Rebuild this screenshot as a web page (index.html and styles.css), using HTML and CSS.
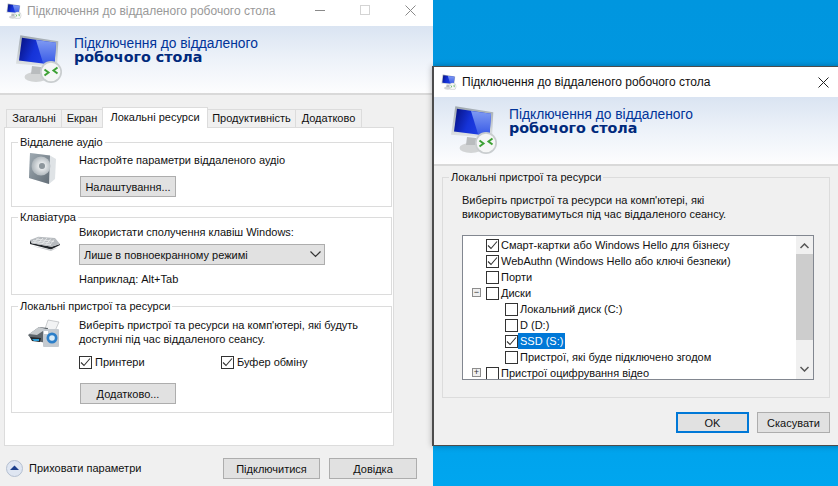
FILE: index.html
```html
<!DOCTYPE html>
<html lang="uk">
<head>
    <meta charset="UTF-8">
    <title>Підключення до віддаленого робочого стола</title>
    <link rel="stylesheet" href="styles.css">
</head>
<body>
    <svg class="defs" width="0" height="0">
        <defs>
            <linearGradient id="screenBlue" x1="0" y1="0" x2="1" y2="0.3">
                <stop offset="0" stop-color="#060f7c"/>
                <stop offset="0.5" stop-color="#1533d8"/>
                <stop offset="1" stop-color="#2444e6"/>
            </linearGradient>
            <linearGradient id="screenShine" x1="0" y1="0" x2="0" y2="1">
                <stop offset="0" stop-color="#7f9af2"/>
                <stop offset="1" stop-color="#3557e6"/>
            </linearGradient>
            <linearGradient id="frameGrey" x1="0" y1="0" x2="0" y2="1">
                <stop offset="0" stop-color="#9fa8af"/>
                <stop offset="1" stop-color="#e3e6e8"/>
            </linearGradient>
            <linearGradient id="speakerGrey" x1="0" y1="0" x2="1" y2="1">
                <stop offset="0" stop-color="#a0abb3"/>
                <stop offset="1" stop-color="#626d76"/>
            </linearGradient>
            <radialGradient id="cone" cx="0.55" cy="0.5" r="0.6">
                <stop offset="0" stop-color="#8d969c"/>
                <stop offset="0.3" stop-color="#e4e7e9"/>
                <stop offset="1" stop-color="#a3acb2"/>
            </radialGradient>
            <symbol id="rdpIcon" viewBox="0 0 49 49">
                <ellipse cx="21" cy="43" rx="11.5" ry="5" fill="#d2d4d5"/>
                <polygon points="17,32 26,33 27,40 16,40" fill="#b9bcbe"/>
                <polygon points="5.3,1.3 43.3,7.3 42,33 1,29.7" fill="url(#frameGrey)"/>
                <polygon points="7,3.800 41,8.800 39.500,31 4,26.500" fill="url(#screenBlue)"/>
                <polygon points="21,6 41,8.800 39.500,31 28,29" fill="url(#screenShine)"/>
                <circle cx="36" cy="38" r="11" fill="#c9cdcf"/>
                <circle cx="36" cy="38" r="9.300" fill="#f5f6f6"/>
                <path d="M29.500 35.500l4 3-4 3M42.500 33.500l-4 3 4 3" fill="none" stroke="#3ea135" stroke-width="2"/>
            </symbol>
            <symbol id="speakerIcon" viewBox="0 0 28 33">
                <polygon points="1,1 21,3.500 27,7 26,27 20,32 0,26" fill="#dfe3e6"/>
                <polygon points="1,1 21,3.500 20,32 0,26" fill="url(#speakerGrey)"/>
                <circle cx="12" cy="14" r="9.500" fill="url(#cone)"/>
                <circle cx="13" cy="14" r="3" fill="#8d969c"/>
            </symbol>
            <symbol id="keyboardIcon" viewBox="0 0 32 16">
                <polygon points="1,8 22,13.500 31,9 31,8 22.700,10.700 2.700,7.300 1,4" fill="#23272b"/>
                <polygon points="1,4 9.300,0.700 26,2 31,8 22.700,10.700 2.700,7.300" fill="#b7bbbf"/>
                <path d="M4 4.500l17 2.500M7 3l18 2.500M3 6l19 3M10 1.500l-5 5M14 2l-5 5.500M18 2l-5 6M22 2.500l-5 6M25 3.500l-4 5.500" stroke="#f2f3f4" stroke-width="0.700" fill="none"/>
                <polygon points="3,10 22,15 29,11.500 22,13.500" fill="#c5c8cb"/>
            </symbol>
            <symbol id="deviceIcon" viewBox="0 0 32 29">
                <polygon points="20,1 31,3 27,12 17,10" fill="#f2f3f4" stroke="#a9adb0" stroke-width="0.600"/>
                <polygon points="0,16 11,8 20,9 18,24 4,21" fill="#5f666c"/>
                <polygon points="1,15 11,8 18,10 9,16" fill="#c7cbce"/>
                <polygon points="2,18 13,19 12,23 4,22" fill="#23282c"/>
                <polygon points="4,20 11,20 11,22 6,22" fill="#2f9ed8"/>
                <rect x="15" y="10" width="16" height="18" rx="1" fill="#c4cad0"/>
                <circle cx="24" cy="19" r="5.500" fill="#2c7fc9"/>
                <circle cx="24" cy="19" r="2.800" fill="#d9ecf8"/>
                <rect x="16" y="12" width="4" height="3" fill="#fff"/>
            </symbol>
            <symbol id="tick" viewBox="0 0 13 13">
                <path d="M2 6.500l3 3 6-7" fill="none" stroke="#333" stroke-width="1.100"/>
            </symbol>
        </defs>
    </svg>

    <div class="window window-main">
        <div class="titlebar titlebar-inactive">
            <svg class="title-icon"><use href="#rdpIcon"/></svg>
            <span class="title-text">Підключення до віддаленого робочого стола</span>
            <span class="win-btn win-min"></span>
            <span class="win-btn win-max"></span>
            <svg class="win-close" viewBox="0 0 11 11"><path d="M0.500 0.500l10 10M10.500 0.500l-10 10" stroke="#8a8a8a" fill="none"/></svg>
        </div>
        <div class="banner">
            <svg class="banner-icon"><use href="#rdpIcon"/></svg>
            <div class="banner-text">
                <div class="banner-line">Підключення до віддаленого</div>
                <div class="banner-bold">робочого стола</div>
            </div>
        </div>
        <div class="tabs">
            <div class="tab tab-general">Загальні</div>
            <div class="tab tab-screen">Екран</div>
            <div class="tab tab-active">Локальні ресурси</div>
            <div class="tab tab-perf">Продуктивність</div>
            <div class="tab tab-extra">Додатково</div>
        </div>
        <div class="panel">
            <fieldset class="group group-audio">
                <legend>Віддалене аудіо</legend>
                <div class="group-row">
                    <svg class="icon-speaker"><use href="#speakerIcon"/></svg>
                    <div class="group-body">
                        <div class="line">Настройте параметри віддаленого аудіо</div>
                        <button class="btn btn-wide btn-audio">Налаштування...</button>
                    </div>
                </div>
            </fieldset>
            <fieldset class="group group-keys">
                <legend>Клавіатура</legend>
                <div class="group-row">
                    <svg class="icon-keyboard"><use href="#keyboardIcon"/></svg>
                    <div class="group-body">
                        <div class="line">Використати сполучення клавіш Windows:</div>
                        <div class="select">
                            <span>Лише в повноекранному режимі</span>
                            <svg class="select-arrow" viewBox="0 0 11 7"><path d="M0.500 0.500l5 5 5-5" fill="none" stroke="#333" stroke-width="1.200"/></svg>
                        </div>
                        <div class="line line-example">Наприклад: Alt+Tab</div>
                    </div>
                </div>
            </fieldset>
            <fieldset class="group group-devices">
                <legend>Локальні пристрої та ресурси</legend>
                <div class="group-row">
                    <svg class="icon-device"><use href="#deviceIcon"/></svg>
                    <div class="group-body">
                        <div class="line">Виберіть пристрої та ресурси на комп'ютері, які будуть</div>
                        <div class="line line-tight">доступні під час віддаленого сеансу.</div>
                        <div class="check-row">
                            <label class="check-item check-item-first"><span class="cb"><svg><use href="#tick"/></svg></span>Принтери</label>
                            <label class="check-item"><span class="cb"><svg><use href="#tick"/></svg></span>Буфер обміну</label>
                        </div>
                        <button class="btn btn-wide btn-more">Додатково...</button>
                    </div>
                </div>
            </fieldset>
        </div>
        <div class="footer">
            <span class="collapse">
                <svg viewBox="0 0 17 17"><circle cx="8.500" cy="8.500" r="8" fill="#dfe6f2" stroke="#b4bfd0"/><polygon points="8.500,5.500 13,10 4,10" fill="#1c3f8c"/></svg>
            </span>
            <span class="collapse-label">Приховати параметри</span>
            <button class="btn btn-connect">Підключитися</button>
            <button class="btn btn-help">Довідка</button>
        </div>
    </div>

    <div class="window window-dialog">
        <div class="titlebar titlebar-dialog">
            <svg class="title-icon"><use href="#rdpIcon"/></svg>
            <span class="title-text">Підключення до віддаленого робочого стола</span>
            <svg class="win-close" viewBox="0 0 11 11"><path d="M0.500 0.500l10 10M10.500 0.500l-10 10" stroke="#222" fill="none"/></svg>
        </div>
        <div class="banner">
            <svg class="banner-icon"><use href="#rdpIcon"/></svg>
            <div class="banner-text">
                <div class="banner-line">Підключення до віддаленого</div>
                <div class="banner-bold">робочого стола</div>
            </div>
        </div>
        <fieldset class="group group-local">
            <legend>Локальні пристрої та ресурси</legend>
            <div class="local-body">
                <div class="line">Виберіть пристрої та ресурси на комп'ютері, які</div>
                <div class="line line-tight">використовуватимуться під час віддаленого сеансу.</div>
                <div class="tree">
                    <ul class="tree-list">
                        <li class="tree-row"><span class="cb"><svg><use href="#tick"/></svg></span>Смарт-картки або Windows Hello для бізнесу</li>
                        <li class="tree-row"><span class="cb"><svg><use href="#tick"/></svg></span>WebAuthn (Windows Hello або ключі безпеки)</li>
                        <li class="tree-row"><span class="cb"></span>Порти</li>
                        <li class="tree-row"><span class="expander">&minus;</span><span class="cb"></span>Диски</li>
                        <li class="tree-row tree-child"><span class="cb"></span>Локальний диск (C:)</li>
                        <li class="tree-row tree-child"><span class="cb"></span>D (D:)</li>
                        <li class="tree-row tree-child"><span class="cb"><svg><use href="#tick"/></svg></span><span class="tree-selected">SSD (S:)</span></li>
                        <li class="tree-row tree-child"><span class="cb"></span>Пристрої, які буде підключено згодом</li>
                        <li class="tree-row"><span class="expander">+</span><span class="cb"></span>Пристрої оцифрування відео</li>
                    </ul>
                    <div class="scrollbar">
                        <svg class="scroll-arrow" viewBox="0 0 9 6"><path d="M0.500 5l4-4 4 4" fill="none" stroke="#555" stroke-width="1.500"/></svg>
                        <div class="scroll-track"><div class="scroll-thumb"></div></div>
                        <svg class="scroll-arrow" viewBox="0 0 9 6"><path d="M0.500 1l4 4 4-4" fill="none" stroke="#555" stroke-width="1.500"/></svg>
                    </div>
                </div>
            </div>
        </fieldset>
        <div class="dialog-actions">
            <button class="btn btn-ok">OK</button>
            <button class="btn btn-cancel">Скасувати</button>
        </div>
    </div>
</body>
</html>
```

FILE: styles.css
```css
:root {
    --face: #f0f0f0;
    --line: #dcdcdc;
    --btn-bg: #e1e1e1;
    --btn-border: #adadad;
    --accent: #0078d7;
}
* {
    box-sizing: border-box;
}
html, body {
    height: 100%;
}
body {
    margin: 0;
    overflow: hidden;
    position: relative;
    font-family: "Liberation Sans", Arial, sans-serif;
    font-size: 11px;
    line-height: 14px;
    color: #111;
    background: linear-gradient(180deg, #0096df 0%, #0099e2 60%, #00a6ef 100%);
}
.defs {
    position: absolute;
}

/* windows */
.window {
    position: absolute;
    background: var(--face);
}
.window-main {
    left: 0;
    top: 0;
    width: 433px;
    height: 486px;
}
.window-dialog {
    left: 432px;
    top: 66px;
    width: 420px;
    height: 380px;
    border: 1px solid #4c4c4c;
    border-width: 1px 1px 1px 2px;
    box-shadow: 0 0 6px rgba(0, 0, 0, 0.3);
}
.titlebar {
    display: flex;
    align-items: center;
    background: #fff;
    position: relative;
    font-size: 12px;
}
.titlebar-inactive {
    height: 26px;
    padding: 0 0 5px 6px;
    color: #999;
}
.titlebar-dialog {
    height: 30px;
    padding: 0 0 0 7px;
    color: #111;
}
.title-icon {
    width: 16px;
    height: 16px;
    margin-right: 5px;
    flex: none;
}
.win-btn {
    position: absolute;
    display: block;
}
.win-min {
    left: 315px;
    top: 10px;
    width: 10px;
    height: 1px;
    background: #8a8a8a;
}
.win-max {
    left: 360px;
    top: 5px;
    width: 10px;
    height: 10px;
    border: 1px solid #d4d4d4;
}
.win-close {
    position: absolute;
    width: 11px;
    height: 11px;
}
.titlebar-inactive .win-close {
    left: 405px;
    top: 5px;
}
.titlebar-dialog .win-close {
    left: 384px;
    top: 10px;
}

/* banner */
.banner {
    height: 69px;
    display: flex;
    padding: 8px 0 0 15px;
    background: linear-gradient(180deg, #dae4f2 0%, #edf2f9 50%, #fdfdfe 100%);
    border-bottom: 2px solid #d9d9d9;
}
.window-dialog .banner {
    padding-left: 16px;
}
.banner-icon {
    width: 49px;
    height: 49px;
    margin-right: 10px;
    flex: none;
}
.banner-text {
    padding-top: 3px;
}
.banner-line {
    font-size: 13.8px;
    line-height: 13px;
    height: 13px;
    color: #003399;
}
.banner-bold {
    font-family: "DejaVu Sans", Verdana, sans-serif;
    font-size: 14.3px;
    font-weight: bold;
    line-height: 14px;
    color: #00297c;
}

/* tabs */
.tabs {
    display: flex;
    align-items: flex-end;
    height: 32px;
    padding-left: 6px;
    position: relative;
    z-index: 1;
}
.tab {
    height: 18px;
    line-height: 17px;
    text-align: center;
    background: #f0f0f0;
    border: 1px solid var(--line);
    border-bottom: none;
    margin-right: -1px;
}
.tab-general { width: 56px; }
.tab-screen { width: 42px; }
.tab-active {
    width: 106px;
    height: 21px;
    line-height: 18px;
    background: #fff;
    margin-bottom: -1px;
    position: relative;
    z-index: 1;
}
.tab-perf { width: 89px; }
.tab-extra { width: 67px; }

.panel {
    margin-left: 4px;
    width: 390px;
    height: 319px;
    background: #fff;
    border: 1px solid var(--line);
    padding: 7px 1px 0 6px;
}

/* group boxes */
.group {
    margin: 0;
    padding: 0;
    border: 1px solid var(--line);
    min-width: 0;
    position: relative;
}
.group legend {
    margin-left: 6px;
    padding: 0 2px;
    line-height: 14px;
}
.group-row {
    display: flex;
}
.group-body {
    flex: 1;
}
.group-audio {
    height: 72px;
    margin-bottom: 3px;
}
.group-keys {
    height: 85px;
    margin-bottom: 4px;
}
.group-devices {
    height: 114px;
}
.icon-speaker {
    width: 28px;
    height: 33px;
    margin: 3px 0 0 17px;
    flex: none;
}
.icon-keyboard {
    width: 32px;
    height: 16px;
    margin: 12px 0 0 17px;
    flex: none;
}
.icon-device {
    width: 32px;
    height: 29px;
    margin: 6px 0 0 16px;
    flex: none;
}
.group-audio .group-body {
    padding-left: 22px;
}
.group-keys .group-body {
    padding-left: 18px;
}
.group-devices .group-body {
    padding-left: 19px;
}
.group-audio .line {
    margin-top: 4px;
}
.group-keys .line:first-child {
    margin-top: 1px;
}
.group-devices .line:first-child {
    margin-top: 5px;
}
.line-tight {
    margin-top: 0;
}
.line-example {
    margin-top: 7px;
}

/* controls */
.btn {
    font: inherit;
    color: #111;
    height: 21px;
    padding: 0;
    background: var(--btn-bg);
    border: 1px solid var(--btn-border);
    display: block;
}
.btn-wide {
    width: 96px;
    margin-left: 1px;
}
.btn-audio {
    margin-top: 9px;
}
.btn-more {
    margin-top: 14px;
}
.select {
    width: 246px;
    height: 21px;
    margin-top: 5px;
    padding: 0 3px 0 4px;
    display: flex;
    align-items: center;
    justify-content: space-between;
    background: var(--btn-bg);
    border: 1px solid var(--btn-border);
}
.select-arrow {
    width: 11px;
    height: 7px;
}
.check-row {
    display: flex;
    margin-top: 9px;
    height: 14px;
}
.check-item {
    display: flex;
    align-items: center;
}
.check-item-first {
    width: 142px;
}
.cb {
    width: 13px;
    height: 13px;
    flex: none;
    margin-right: 3px;
    background: #fff;
    border: 1px solid #333;
    display: block;
    position: relative;
}
.cb svg {
    position: absolute;
    left: -1px;
    top: -1px;
    width: 13px;
    height: 13px;
}

/* footer */
.footer {
    height: 40px;
    padding: 12px 16px 0 6px;
    display: flex;
    align-items: flex-start;
}
.collapse {
    width: 17px;
    height: 17px;
    margin-top: 2px;
    margin-right: 6px;
}
.collapse svg {
    display: block;
    width: 17px;
    height: 17px;
}
.collapse-label {
    line-height: 21px;
    width: 194px;
}
.btn-connect {
    width: 97px;
    margin-right: 9px;
}
.btn-help {
    width: 88px;
}

/* dialog */
.group-local {
    margin: 4px 0 0 8px;
    width: 388px;
    height: 228px;
}
.group-local legend {
    margin-left: 6px;
}
.local-body {
    padding: 9px 0 0 19px;
}
.tree {
    display: flex;
    width: 352px;
    height: 145px;
    margin-top: 14px;
    background: #fff;
    border: 1px solid #828790;
}
.tree-list {
    flex: 1;
    margin: 0;
    padding: 1px 0 0 23px;
    list-style: none;
    overflow: hidden;
}
.tree-row {
    height: 16px;
    display: flex;
    align-items: center;
    position: relative;
    white-space: nowrap;
}
.tree-row .cb {
    margin-right: 2px;
}
.tree-child {
    padding-left: 19px;
}
.tree-selected {
    background: var(--accent);
    color: #fff;
    height: 16px;
    line-height: 16px;
    padding: 0 2px;
    margin-left: -2px;
}
.expander {
    position: absolute;
    left: -14px;
    top: 3px;
    width: 9px;
    height: 9px;
    border: 1px solid #8d8d8d;
    background: #f0f0f0;
    font-size: 9px;
    line-height: 7px;
    text-align: center;
    color: #333;
}
.scrollbar {
    width: 17px;
    flex: none;
    background: #f0f0f0;
    display: flex;
    flex-direction: column;
    align-items: center;
}
.scroll-arrow {
    width: 9px;
    height: 6px;
    margin: 7px 0;
    flex: none;
}
.scroll-track {
    flex: 1;
    width: 100%;
    margin-top: -2px;
}
.scroll-thumb {
    height: 86px;
    background: #cdcdcd;
}
.dialog-actions {
    display: flex;
    gap: 8px;
    margin: 14px 0 0 242px;
}
.btn-ok {
    width: 73px;
    border: 2px solid var(--accent);
}
.btn-cancel {
    width: 73px;
}
```
